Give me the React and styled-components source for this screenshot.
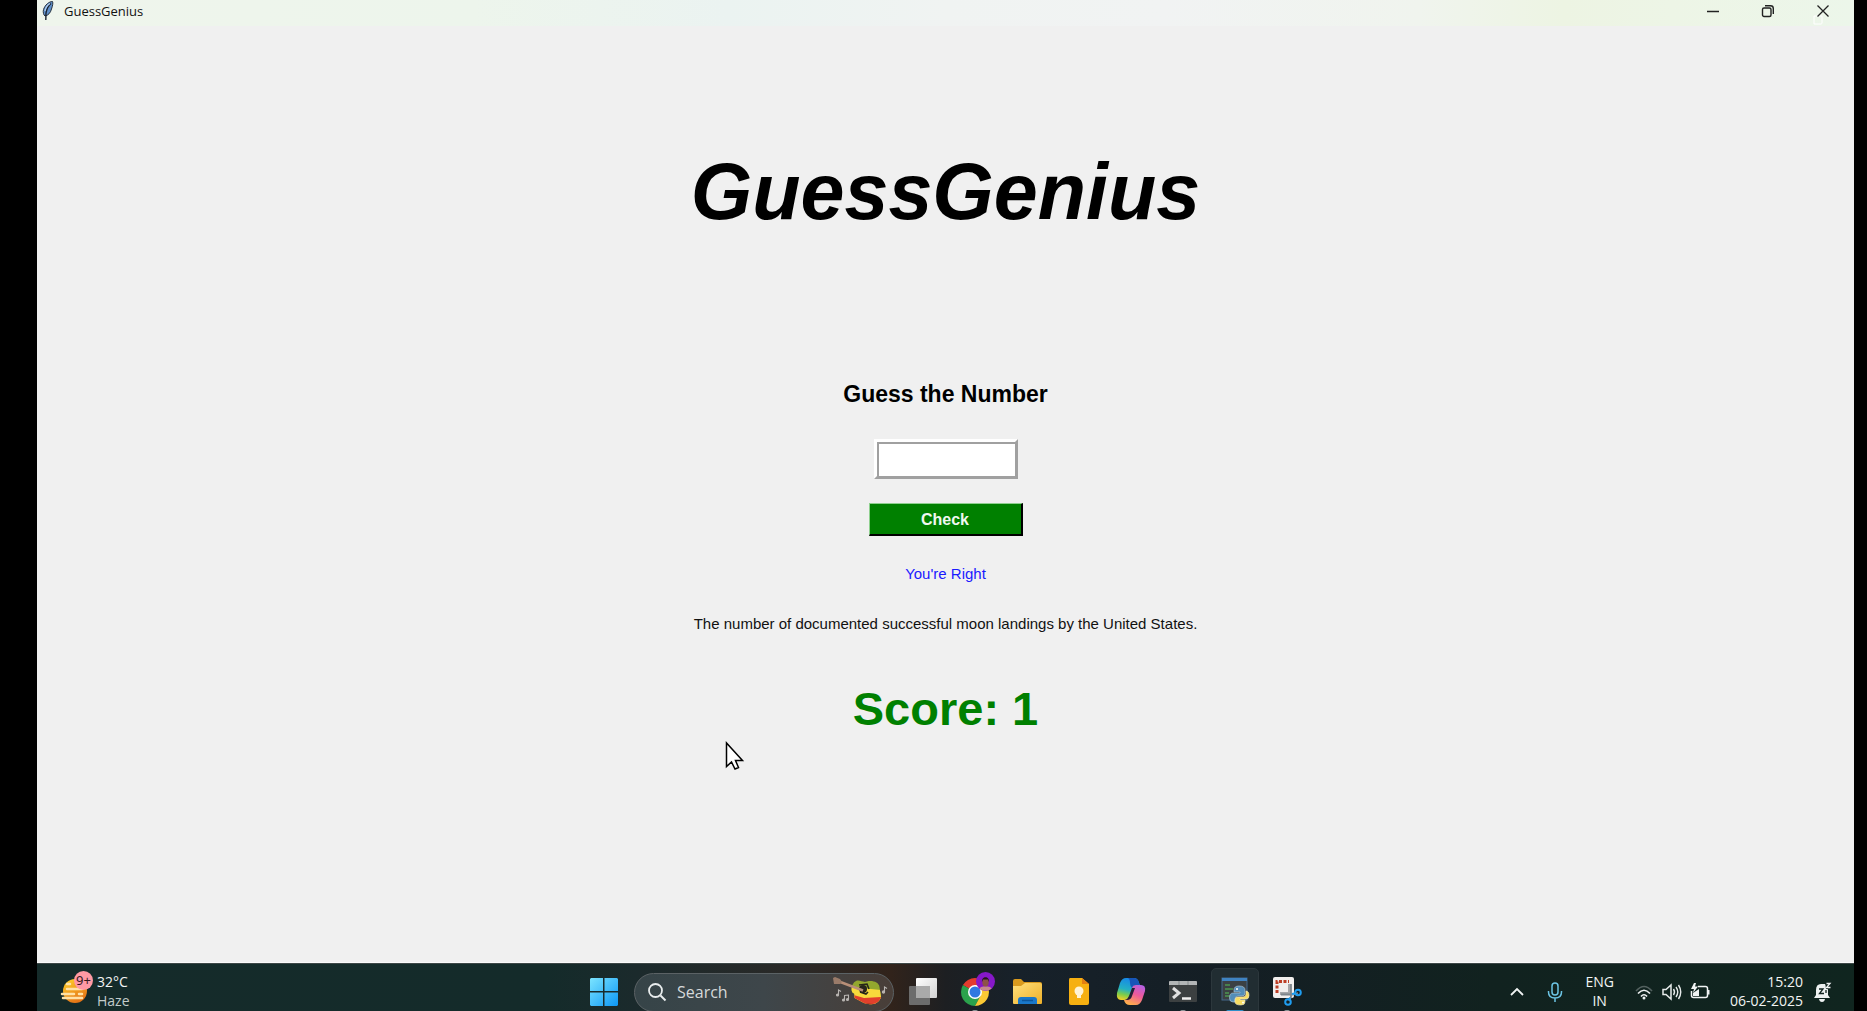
import React from "react";
import styled, { createGlobalStyle } from "styled-components";

const GlobalStyle = createGlobalStyle`
  * { box-sizing: border-box; }
  body { margin: 0; background: #000; }
  button { font: inherit; color: inherit; cursor: default; }
`;

const Screen = styled.div`
  display: flex;
  flex-direction: column;
  height: 100vh;
  padding: 0 13px 0 37px;
  overflow: hidden;
  background: #000;
  font-family: "Noto Sans", "Open Sans", sans-serif;
`;

const TitleBar = styled.header`
  display: flex;
  align-items: center;
  flex: none;
  height: 26px;
  padding: 0 4px 4px 4px;
  background: linear-gradient(90deg, #eff5ec 0%, #edf5ec 24%, #ebf3f1 38%, #f0f3f2 50%, #f1f3f3 62%, #f0f4ee 76%, #edf4e3 84%, #edf5e6 90%, #ecf6ea 100%);
`;

const WindowTitle = styled.span`
  flex: 1;
  margin-left: 10px;
  font: 13px/20px "Open Sans", sans-serif;
  color: #111;
`;

const WindowButton = styled.button`
  display: flex;
  align-items: center;
  justify-content: center;
  width: 55px;
  height: 22px;
  padding: 0;
  border: 0;
  background: none;
`;

const Game = styled.main`
  display: flex;
  flex: 1;
  flex-direction: column;
  align-items: center;
  position: relative;
  padding-top: 120px;
  border-bottom: 1px solid #fafafa;
  background: #f0f0f0;
  font-family: "Liberation Sans", Arial, sans-serif;
  color: #000;
`;

const Heading = styled.h1`
  margin: 0 0 143px;
  font-size: 79px;
  line-height: 92px;
  font-style: italic;
  font-weight: 700;
`;

const GuessForm = styled.form`
  display: flex;
  flex-direction: column;
  align-items: center;
`;

const GuessLabel = styled.label`
  margin-bottom: 32px;
  font-size: 23px;
  line-height: 26px;
  font-weight: 700;
`;

const GuessInput = styled.input`
  width: 144px;
  height: 40px;
  margin-bottom: 24px;
  padding: 0 8px;
  border: 3px solid;
  border-color: #fff #a0a0a0 #a0a0a0 #fff;
  border-radius: 0;
  outline: 0;
  background: #fff;
  box-shadow: inset 2px 2px 0 #a0a0a0, inset -2px -2px 0 #fff;
  font-size: 16px;
`;

const CheckButton = styled.button`
  width: 154px;
  height: 33px;
  padding: 1px 0 0;
  border-style: solid;
  border-width: 1px 2px 2px 1px;
  border-color: #8fd08f #000 #000 #8fd08f;
  background: #008000;
  color: #f0f8f0;
  font-size: 16px;
  font-weight: 700;
`;

const Message = styled.p`
  margin: ${(p) => p.$gap}px 0 0;
  font-size: 15px;
  line-height: 18px;
  color: ${(p) => p.$color};
`;

const Score = styled.p`
  margin: 49px 0 0;
  font-size: 47px;
  line-height: 54px;
  font-weight: 700;
  color: #008000;
`;

const Pointer = styled.svg`
  position: absolute;
  left: calc(50% - 221px);
  top: 715px;
`;

const Taskbar = styled.footer`
  display: grid;
  grid-template-columns: 1fr auto 1fr;
  flex: none;
  height: 48px;
  padding-top: 8px;
  border-top: 1px solid #3d4747;
  background: linear-gradient(90deg, #152b2a 0%, #142b2a 28%, #1b2a2c 33%, #2b2927 42%, #31231b 47%, #1d1f22 50%, #17212a 54%, #141e24 66%, #11221f 80%, #10251f 100%);
  color: #f2f4f4;
`;

const Group = styled.div`
  display: flex;
  align-items: center;
  justify-content: ${(p) => p.$align || "flex-start"};
  height: 40px;
`;

const Weather = styled.button`
  display: flex;
  align-items: center;
  gap: 3px;
  margin-left: 21px;
  padding: 0;
  border: 0;
  background: none;
  text-align: left;
`;

const WeatherIcon = styled.span`
  position: relative;
  width: 36px;
  height: 40px;
`;

const Badge = styled.span`
  position: absolute;
  left: 16px;
  top: -1px;
  width: 19px;
  height: 19px;
  border-radius: 50%;
  background: #ff99a4;
  color: #35181c;
  font-size: 13px;
  line-height: 19px;
  text-align: center;
`;

const Stack = styled.span`
  display: flex;
  flex-direction: column;
  padding-bottom: 2px;
  text-align: ${(p) => p.$align || "left"};
  font: 14px/19px "Open Sans", sans-serif;
`;

const Dim = styled.span`
  color: #c3cbca;
`;

const AppButton = styled.button`
  display: flex;
  align-items: center;
  justify-content: center;
  position: relative;
  width: 52px;
  height: 40px;
  padding: 0;
  border: 0;
  background: none;
`;

const RunningMark = styled.span`
  position: absolute;
  bottom: 0;
  left: 50%;
  width: ${(p) => (p.$active ? 18 : 6)}px;
  height: 2px;
  margin-left: ${(p) => (p.$active ? -9 : -3)}px;
  border-radius: 2px 2px 0 0;
  background: ${(p) => (p.$active ? "#2f8fc9" : "#8b9295")};
`;

const ActiveTile = styled.span`
  display: flex;
  align-items: center;
  justify-content: center;
  width: 48px;
  height: 48px;
  border: 1px solid #2c373c;
  border-radius: 5px;
  background: #212d32;
`;

const SearchBox = styled.label`
  display: flex;
  align-items: center;
  width: 260px;
  height: 39px;
  margin: 0 3px 0 4px;
  padding: 0 5px 0 12px;
  border: 1px solid #5b6265;
  border-radius: 20px;
  background: linear-gradient(90deg, #364448, #3e464a 50%, #493e38);
`;

const SearchInput = styled.input`
  flex: 1;
  min-width: 0;
  margin-left: 10px;
  padding: 0;
  border: 0;
  outline: 0;
  background: none;
  color: #fff;
  font: 16px/20px "Open Sans", sans-serif;
  &::placeholder { color: #d5d9da; opacity: 1; }
`;

const TrayButton = styled.button`
  display: flex;
  align-items: center;
  justify-content: center;
  gap: ${(p) => p.$gap || 0}px;
  height: 40px;
  margin-right: ${(p) => p.$after || 0}px;
  padding: 0;
  border: 0;
  background: none;
`;

const Art = styled.svg`
  display: block;
  flex: none;
  overflow: visible;
`;

const Icon = ({ children, size = 36 }) => (
  <Art width={size} height={size} viewBox={`0 0 ${size} ${size}`} fill="none" aria-hidden="true">
    {children}
  </Art>
);

const Feather = () => (
  <svg width="13" height="20" viewBox="0 0 13 20" aria-hidden="true">
    <path d="M11.5 0.5 C8 0.5 4 4 2.5 8.5 C1.8 11 2.5 14 4 15 C7 14.5 9.5 12 10.5 8 C11.5 5 12.3 2 11.5 0.5Z" fill="#5f8fca" stroke="#26303c" />
    <path d="M10 2.5 C7 5 5.5 9 5 12 L4.8 19" stroke="#1b2430" strokeWidth="1.4" fill="none" />
    <path d="M9 2.5 C6.5 4 4.5 7 4 10" stroke="#b5d0ee" strokeWidth="1.2" fill="none" />
  </svg>
);

const Start = () => (
  <Icon>
    <defs>
      <linearGradient id="win" x1="4" y1="4" x2="32" y2="32" gradientUnits="userSpaceOnUse">
        <stop stopColor="#7be4ff" /><stop offset="1" stopColor="#0d97f5" />
      </linearGradient>
    </defs>
    <path d="M5 4H17V17H4V5ZM18.500 4H31L32 5V17H18.500ZM4 18.500H17V32H5L4 31ZM18.500 18.500H32V31L31 32H18.500Z" fill="url(#win)" />
  </Icon>
);

const Guitar = () => (
  <svg width="56" height="34" viewBox="0 0 56 34" aria-hidden="true">
    <defs>
      <clipPath id="body">
        <path d="M24 6 C28 4.500 31 8 35 6.500 C40 5 47 7 47.500 12 L49 22 C48 26 44 29 41 29 C37 29.500 34 29 31 27.500 L23.500 23.500 C21 22 24 19 21 18 C18 15 20 8 24 6Z" />
      </clipPath>
    </defs>
    <g clipPath="url(#body)">
      <rect width="56" height="34" fill="#93a72e" />
      <path d="M18 12 L50 15 V34 H18Z" fill="#f8da3c" />
      <path d="M18 19 L32 23 L50 22 V34 H18Z" fill="#e2402c" />
      <path d="M20 24 L32 29 L44 30" stroke="#8d2a20" strokeWidth="1.500" fill="none" />
    </g>
    <circle cx="31" cy="14" r="4" fill="#27251a" />
    <path d="M27 10 L35 9 L37 14 M28 17 L34 19 L36 17" stroke="#27251a" strokeWidth="1.600" fill="none" />
    <path d="M7 6.500 L31 15.500" stroke="#b98f78" strokeWidth="2.500" />
    <path d="M1 3 L3 2 L8 4 L10 7 L8 9 L2 9Z" fill="#9a7b69" />
    <g stroke="#b9b5b2" strokeWidth="1.100" fill="#b9b5b2">
      <path d="M6.500 20V15L9 16.500" fill="none" /><circle cx="5.500" cy="20" r="1" />
      <path d="M12.500 25V20.500L16.500 20V24.500" fill="none" /><circle cx="11.500" cy="25" r="1" /><circle cx="15.500" cy="24.500" r="1" />
      <path d="M52.500 17V12L55 13.500" fill="none" /><circle cx="51.500" cy="17" r="1.100" />
    </g>
  </svg>
);

const TaskView = () => (
  <Icon>
    <defs>
      <linearGradient id="tv" x1="0" y1="0" x2="1" y2="1"><stop stopColor="#fff" /><stop offset="1" stopColor="#d2d2d2" /></linearGradient>
    </defs>
    <rect x="11" y="4" width="21" height="20" rx="1" fill="url(#tv)" />
    <rect x="4" y="12" width="21" height="19" rx="1" fill="#6c6c6c" />
    <rect x="11" y="12" width="14" height="12" fill="#aaa" />
  </Icon>
);

const Chrome = () => (
  <Icon>
    <path d="M18 18 L5.900 11 A14 14 0 0 1 30.100 11Z" fill="#e33b2e" />
    <path d="M18 18 L5.900 11 A14 14 0 0 0 18 32 L24 21.500Z" fill="#2ba24c" />
    <path d="M18 11 H30.100 A14 14 0 0 1 18 32 L24 21Z" fill="#fcc934" />
    <circle cx="18" cy="18" r="7" fill="#fff" />
    <circle cx="18" cy="18" r="5.500" fill="#2f78e0" />
    <circle cx="28.500" cy="7.500" r="9.500" fill="#8618c8" />
    <path d="M22.500 14.500 C24 11.500 33 11.500 34.500 14.500 C31 17.500 26 17.500 22.500 14.500Z" fill="#c68a8e" />
    <ellipse cx="28.500" cy="8" rx="3.200" ry="4.500" fill="#8d5347" />
    <path d="M25 8 C24 1.500 33 1.500 32 8 L31 5.500 H26Z" fill="#23131f" />
  </Icon>
);

const Explorer = () => (
  <Icon>
    <defs>
      <linearGradient id="fold" x1="0" y1="0" x2="1" y2="1"><stop stopColor="#ffe07c" /><stop offset="1" stopColor="#eeb02a" /></linearGradient>
    </defs>
    <path d="M4 7 Q4 5 6 5 H12 L15 8 H31 Q33 8 33 10 V15 H4Z" fill="#d99a1e" />
    <path d="M4 12 H12 L16 9 H31 Q33 9 33 11 V29 Q33 30 32 30 H5 Q4 30 4 29Z" fill="url(#fold)" />
    <path d="M9 30 V26 Q9 23 12 23 H25 Q28 23 28 26 V30Z" fill="#1a78ca" />
    <path d="M13 26.500H24" stroke="#0c559b" strokeWidth="1.500" />
  </Icon>
);

const Keep = () => (
  <Icon>
    <path d="M9 4 H21 L28 10 V29 Q28 31 26 31 H10 Q8 31 8 29 V6 Q8 4 9 4Z" fill="#f6b011" />
    <path d="M21 4 L28 10 H21Z" fill="#e37f12" />
    <circle cx="18" cy="17" r="4.500" fill="#fff3d4" />
    <path d="M16 21 H20 V24 H16Z" fill="#fff3d4" />
  </Icon>
);

const Copilot = () => (
  <Icon>
    <defs>
      <linearGradient id="cp1" x1="14" y1="4" x2="9" y2="26" gradientUnits="userSpaceOnUse">
        <stop stopColor="#1788e8" /><stop offset=".5" stopColor="#23b1c3" /><stop offset=".75" stopColor="#7ccc4a" /><stop offset="1" stopColor="#f3cf26" />
      </linearGradient>
      <linearGradient id="cp2" x1="28" y1="10" x2="19" y2="31" gradientUnits="userSpaceOnUse">
        <stop stopColor="#ae61ea" /><stop offset=".5" stopColor="#ee599b" /><stop offset="1" stopColor="#ffad4d" />
      </linearGradient>
    </defs>
    <path d="M13 4 H21 Q25 4 26 9 L27 11 H23 Q20 11 19 15 L17 21 Q15 26 11 26 H8 Q3 26 4 19 L7 9 Q9 4 13 4Z" fill="url(#cp1)" />
    <path d="M16 4 H21 Q25 4 26 9 L27 11 H23 Q20 11 19 14Q17 12 17 9Q17 5 15 4Z" fill="#1755b8" />
    <path d="M23 11 H28 Q33 11 32 17 L29 26 Q27 31 23 31 H17 Q12 31 11 26 Q15 26 17 21 L19 14 Q20 11 23 11Z" fill="url(#cp2)" />
    <path d="M19 14 L16 22 Q15 25 12 26 H14 Q18 26 19 22 L22 14Z" fill="#231f35" />
  </Icon>
);

const Terminal = () => (
  <Icon>
    <rect x="4" y="7" width="28" height="21" rx="1" fill="#3c4041" />
    <path d="M4 8Q4 7 5 7H31Q32 7 32 8V11H4Z" fill="#b2b5b6" />
    <path d="M14 7V11M23 7V11" stroke="#858a8b" />
    <path d="M8 14 L14 19 L8 24" stroke="#e0e0e0" strokeWidth="3" />
    <path d="M17 24.500H26" stroke="#f0f0f0" strokeWidth="2.500" />
  </Icon>
);

const Python = () => (
  <Icon>
    <rect x="5" y="4" width="25" height="22" fill="#3b4144" stroke="#47698a" />
    <path d="M5 5.500H30" stroke="#3f83c2" strokeWidth="3" />
    <path d="M8 11H13M8 15H16M8 19H12M8 22H14" stroke="#4d9750" strokeWidth="1.500" />
    <path d="M22 12 Q17 12 17 16 V18 H23 V19 H16 Q12.500 19 12.500 24 Q12.500 28 16 28 H18 V25 Q18 22 21 22 H25 Q28 22 28 19 V16 Q28 12 22 12Z" fill="#548db8" stroke="#b5cad9" strokeWidth=".6" />
    <path d="M29 17 V20 Q29 23 26 23 H21 Q18 23 18 26 V28 Q18 31 24 31 Q28 31 28 28 V26 H23 V25 H29 Q32 25 32 21.500 Q32 17 29 17Z" fill="#f8dc62" stroke="#f4edc9" strokeWidth=".6" />
    <circle cx="20" cy="15" r="1" fill="#fff" /><circle cx="26" cy="28.500" r="1" fill="#fff" />
  </Icon>
);

const Snip = () => (
  <Icon>
    <rect x="4" y="3" width="21" height="21" rx="2" fill="#f1efee" />
    <path d="M8 19V7.500H20" stroke="#bd3f27" strokeWidth="3" strokeDasharray="3 1.500" />
    <path d="M11 19.500H20.500V10" stroke="#a5a6a9" strokeWidth="3" />
    <path d="M22 10V23L20 27M12 20.500H24L29 19" stroke="#7e858b" strokeWidth="1.800" />
    <circle cx="29" cy="18.500" r="2.800" stroke="#1f9df0" strokeWidth="2" />
    <circle cx="19" cy="28" r="2.800" stroke="#1f9df0" strokeWidth="2" />
    <path d="M23 20L26.500 19.200M21 23.500L20.300 25.500" stroke="#1f9df0" strokeWidth="2" />
  </Icon>
);

const HazeSun = () => (
  <svg width="36" height="40" viewBox="0 0 36 40" aria-hidden="true">
    <defs>
      <linearGradient id="sun" x1="0" y1="0" x2=".5" y2="1"><stop stopColor="#ffd52b" /><stop offset="1" stopColor="#e57416" /></linearGradient>
    </defs>
    <circle cx="17" cy="19" r="12" fill="url(#sun)" />
    <g stroke="#ffe1a5" strokeWidth="2.500" strokeLinecap="round">
      <path d="M9 12H12M9 17H24M4 22H16M21 22H24M5 26H24" />
    </g>
  </svg>
);

const apps = [
  { name: "Task View", Drawing: TaskView },
  { name: "Google Chrome", Drawing: Chrome, running: true },
  { name: "File Explorer", Drawing: Explorer },
  { name: "Google Keep", Drawing: Keep },
  { name: "Copilot", Drawing: Copilot },
  { name: "Terminal", Drawing: Terminal, running: true },
  { name: "Python", Drawing: Python, running: true, active: true },
  { name: "Snipping Tool", Drawing: Snip, running: true },
];

export default function App() {
  return (
    <Screen>
      <GlobalStyle />
      <TitleBar>
        <Feather />
        <WindowTitle>GuessGenius</WindowTitle>
        <WindowButton aria-label="Minimize">
          <Icon size={14}><path d="M1 7.500H13" stroke="#222" strokeWidth="1.500" /></Icon>
        </WindowButton>
        <WindowButton aria-label="Restore">
          <Icon size={14}>
            <rect x="1.500" y="4" width="8.500" height="8.500" rx="1.500" stroke="#222" strokeWidth="1.400" />
            <path d="M4 1.800H9.500Q12.300 1.800 12.300 4.500V10" stroke="#222" strokeWidth="1.400" />
          </Icon>
        </WindowButton>
        <WindowButton aria-label="Close">
          <Icon size={14}>
            <path d="M-2 12H6M-2 12V20H5Q6 20 6 19V12" stroke="#fff" strokeWidth="1" />
            <path d="M1.500 1.500L12.500 12.500M12.500 1.500L1.500 12.500" stroke="#222" strokeWidth="1.300" />
          </Icon>
        </WindowButton>
      </TitleBar>

      <Game>
        <Heading>GuessGenius</Heading>
        <GuessForm onSubmit={(e) => e.preventDefault()}>
          <GuessLabel htmlFor="guess">Guess the Number</GuessLabel>
          <GuessInput id="guess" type="text" inputMode="numeric" autoComplete="off" />
          <CheckButton type="submit">Check</CheckButton>
        </GuessForm>
        <Message $gap={29} $color="#1a1aff">You're Right</Message>
        <Message $gap={32} $color="#111">
          The number of documented successful moon landings by the United States.
        </Message>
        <Score>Score: 1</Score>
        <Pointer width="21" height="30" viewBox="0 0 21 30" aria-hidden="true">
          <path d="M1.500 2V25.500L6.500 21L10 28L13.500 26.500L10.500 19.500H17.500Z" fill="#fff" stroke="#000" strokeWidth="1.500" />
        </Pointer>
      </Game>

      <Taskbar>
        <Group>
          <Weather>
            <WeatherIcon>
              <HazeSun />
              <Badge>9+</Badge>
            </WeatherIcon>
            <Stack>
              <span>32°C</span>
              <Dim>Haze</Dim>
            </Stack>
          </Weather>
        </Group>

        <Group>
          <AppButton aria-label="Start"><Start /></AppButton>
          <SearchBox>
            <Icon size={20}>
              <circle cx="8.500" cy="8.500" r="6.500" stroke="#e9edee" strokeWidth="1.800" />
              <path d="M13.500 13.500L18.500 18.500" stroke="#e9edee" strokeWidth="2" />
            </Icon>
            <SearchInput type="search" placeholder="Search" aria-label="Search" />
            <Guitar />
          </SearchBox>
          {apps.map(({ name, Drawing, running, active }) => (
            <AppButton key={name} aria-label={name}>
              {active ? <ActiveTile><Drawing /></ActiveTile> : <Drawing />}
              {running && <RunningMark $active={active} />}
            </AppButton>
          ))}
        </Group>

        <Group $align="flex-end">
          <TrayButton aria-label="Show hidden icons" $after={20}>
            <Icon size={16}><path d="M2 11L8 5L14 11" stroke="#f0f3f3" strokeWidth="1.800" /></Icon>
          </TrayButton>
          <TrayButton aria-label="Microphone" $after={20}>
            <Icon size={20}>
              <rect x="7" y="1" width="6" height="12" rx="3" stroke="#6cc4e4" strokeWidth="1.500" />
              <path d="M3.500 9V10Q3.500 16 10 16Q16.500 16 16.500 10V9M10 16V20" stroke="#6cc4e4" strokeWidth="1.500" />
            </Icon>
          </TrayButton>
          <TrayButton $after={20}>
            <Stack $align="center">
              <span>ENG</span>
              <span>IN</span>
            </Stack>
          </TrayButton>
          <TrayButton aria-label="Network, volume and battery" $gap={8} $after={20}>
            <Icon size={20}>
              <path d="M2 9Q10 0 18 9" stroke="#53615f" strokeWidth="1.600" />
              <path d="M4 11.500Q10 5 16 11.500M7 14.500Q10 11 13 14.500" stroke="#f0f3f3" strokeWidth="1.700" />
              <circle cx="10" cy="16" r="1.500" fill="#f0f3f3" />
            </Icon>
            <Icon size={20}>
              <path d="M1 7.500H4L9 3V17L4 12.500H1Z" stroke="#e6eaea" strokeWidth="1.500" />
              <path d="M11.500 7Q13.500 10 11.500 13M14 5Q17.500 10 14 15M16.500 3Q21 10 16.500 17" stroke="#e6eaea" strokeWidth="1.400" />
            </Icon>
            <Icon size={20}>
              <path d="M8 4.500H15.500Q17.500 4.500 17.500 6.500V13.500Q17.500 15.500 15.500 15.500H3.500Q1.500 15.500 1.500 13.500V9" stroke="#f0f3f3" strokeWidth="1.500" />
              <path d="M18.500 8V12.500" stroke="#f0f3f3" strokeWidth="2" />
              <path d="M3 14V11L9 7V14Z" fill="#f0f3f3" />
              <path d="M4 1L1 7H4L3 11L8 4.500H5L6 1Z" fill="#f0f3f3" />
            </Icon>
          </TrayButton>
          <TrayButton $gap={10} $after={21}>
            <Stack $align="right">
              <span>15:20</span>
              <span>06-02-2025</span>
            </Stack>
            <Icon size={20}>
              <path d="M3 13V8Q3 2 8 2H12Q14 3 15 8V13L17 16H1ZM6 17H12Q11.500 20 9 20Q6.500 20 6 17Z" fill="#edf1f1" />
              <path d="M12 0H19V7H13Z" fill="#11231f" />
              <path d="M13.500 1.500H17L13.500 5.500H17.500" stroke="#edf1f1" strokeWidth="1.300" />
              <path d="M6 7H10L6.500 11.500H11M13 8V11" stroke="#11231f" strokeWidth="1.300" />
            </Icon>
          </TrayButton>
        </Group>
      </Taskbar>
    </Screen>
  );
}
